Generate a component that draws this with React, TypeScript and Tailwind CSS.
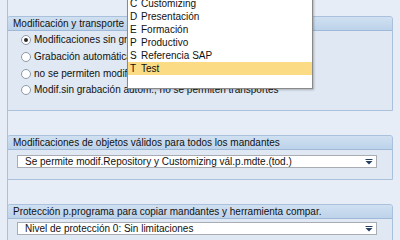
import React from 'react';

const font = { fontFamily: '"Liberation Sans", Arial, sans-serif' };

const radios = [
  { label: 'Modificaciones sin grabación automática', checked: true },
  { label: 'Grabación automática de modificaciones', checked: false },
  { label: 'no se permiten modificaciones', checked: false },
  { label: 'Modif.sin grabación autom., no se permiten transportes', checked: false },
];

const roles = [
  { key: 'C', label: 'Customizing' },
  { key: 'D', label: 'Presentación' },
  { key: 'E', label: 'Formación' },
  { key: 'P', label: 'Productivo' },
  { key: 'S', label: 'Referencia SAP' },
  { key: 'T', label: 'Test' },
];

function Radio({ checked }: { checked: boolean }) {
  return (
    <span className="flex h-[10px] w-[10px] shrink-0 items-center justify-center rounded-full border border-[#8e9aa8] bg-white">
      {checked && <span className="h-[4px] w-[4px] rounded-full bg-[#2a2a2a]" />}
    </span>
  );
}

function GroupHeader({ title }: { title: string }) {
  return (
    <div className="flex h-[14px] items-center rounded-t-[3px] border-b border-[#9fbad8] bg-gradient-to-b from-[#d0e0f1] to-[#bdd3ea] pl-[5px] text-[10px] leading-none text-[#111]">
      {title}
    </div>
  );
}

function Select({ value }: { value: string }) {
  return (
    <div className="ml-[9px] mr-[15px] flex h-[13px] items-center justify-between border border-[#a9adb3] bg-white pl-[7px] pr-[3px] text-[10px] leading-none text-[#111]">
      <span>{value}</span>
      <svg width="8" height="6" viewBox="0 0 8 6">
        <rect x="0.5" y="0" width="7" height="1" fill="#253f63" />
        <path d="M0.5 2 L7.5 2 L4 5.5 Z" fill="#253f63" />
      </svg>
    </div>
  );
}

export default function App() {
  return (
    <div className="relative h-[240px] w-[400px] overflow-hidden bg-[#e6edf6]" style={font}>
      <div className="ml-[7px] flex w-[386px] flex-col gap-[24px] border-l border-[#a9c1dc] pt-[16px]">
        {/* Modificación y transporte */}
        <div className="-ml-px h-[95px] rounded-t-[3px] border border-[#a9c1dc] bg-[#dfe8f3]">
          <GroupHeader title="Modificación y transporte" />
          <div className="flex flex-col pl-[13px] pt-[1px]">
            {radios.map((r, i) => (
              <div key={i} className="flex h-[16.67px] items-center gap-[3px] text-[10px] leading-none text-[#111]">
                <Radio checked={r.checked} />
                <span>{r.label}</span>
              </div>
            ))}
          </div>
        </div>

        {/* Modificaciones de objetos */}
        <div className="-ml-px h-[45px] rounded-t-[3px] border border-[#a9c1dc] bg-[#dfe8f3]">
          <GroupHeader title="Modificaciones de objetos válidos para todos los mandantes" />
          <div className="pt-[5px]">
            <Select value="Se permite modif.Repository y Customizing vál.p.mdte.(tod.)" />
          </div>
        </div>

        {/* Protección */}
        <div className="-ml-px h-[60px] rounded-t-[3px] border border-[#a9c1dc] bg-[#dfe8f3]">
          <GroupHeader title="Protección p.programa para copiar mandantes y herramienta compar." />
          <div className="pt-[3px]">
            <Select value="Nivel de protección 0: Sin limitaciones" />
          </div>
        </div>
      </div>

      {/* Dropdown list open over the first group */}
      <div className="absolute left-[127px] top-[-4px] w-[186px] border border-[#8a8a8a] bg-white shadow-[1px_1px_2px_rgba(0,0,0,0.25)]">
        {roles.map((r) => (
          <div
            key={r.key}
            className={`flex h-[13px] items-center text-[10px] leading-none text-[#111] ${r.key === 'T' ? 'bg-[#fbdb84]' : ''}`}
          >
            <span className="w-[13px] pl-[2px]">{r.key}</span>
            <span>{r.label}</span>
          </div>
        ))}
        <div className="h-[13px]" />
      </div>
    </div>
  );
}
